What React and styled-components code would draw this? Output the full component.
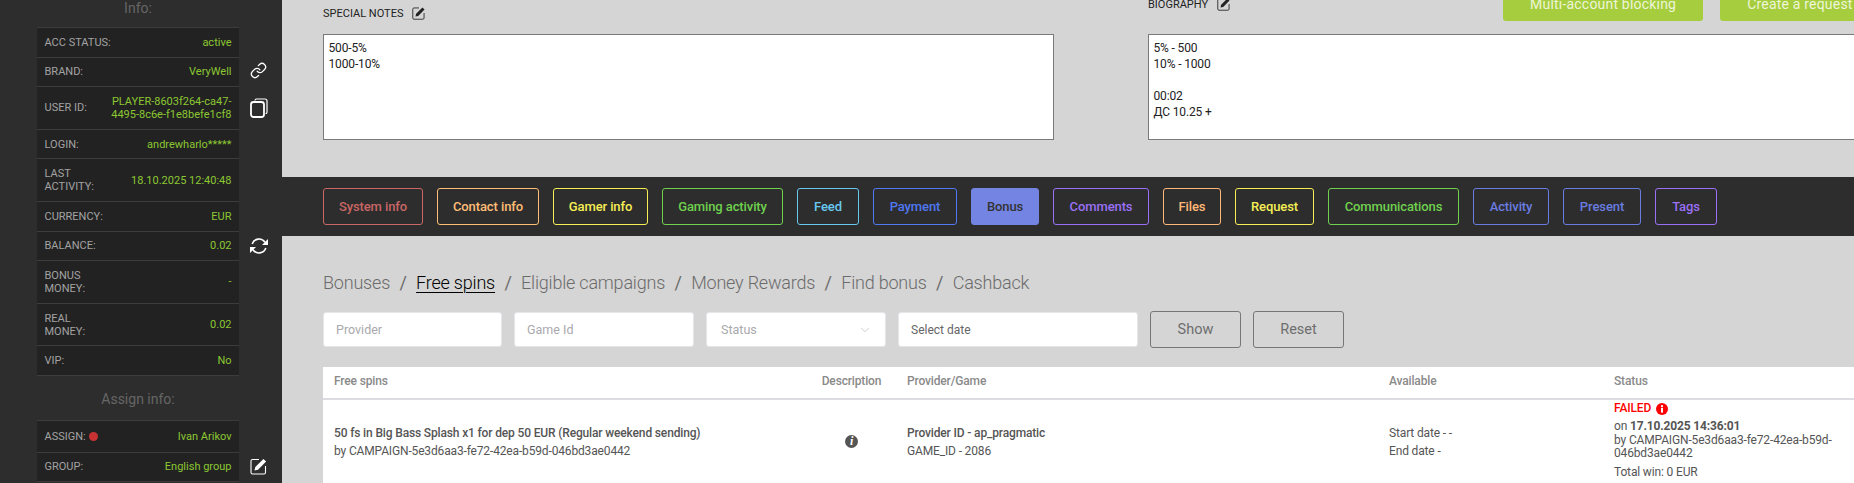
import React from 'react'
import styled, { createGlobalStyle } from 'styled-components'
import { ChevronDown, Link } from 'lucide-react'

const playerRows = [
  { label: 'ACC STATUS:', value: 'active' },
  { label: 'BRAND:', value: 'VeryWell' },
  { label: 'USER ID:', value: 'PLAYER-8603f264-ca47-\n4495-8c6e-f1e8befe1cf8' },
  { label: 'LOGIN:', value: 'andrewharlo*****' },
  { label: 'LAST\nACTIVITY:', value: '18.10.2025 12:40:48' },
  { label: 'CURRENCY:', value: 'EUR' },
  { label: 'BALANCE:', value: '0.02' },
  { label: 'BONUS\nMONEY:', value: '-' },
  { label: 'REAL\nMONEY:', value: '0.02' },
  { label: 'VIP:', value: 'No' },
]

const tabs = [
  { name: 'System info', color: '#c96666', width: 100 },
  { name: 'Contact info', color: '#ffbe76', width: 102 },
  { name: 'Gamer info', color: '#f6ee55', width: 95 },
  { name: 'Gaming activity', color: '#6fd14e', width: 121 },
  { name: 'Feed', color: '#68c8f0', width: 62 },
  { name: 'Payment', color: '#4f78f2', width: 84 },
  { name: 'Bonus', color: '#7484e2', width: 68, active: true },
  { name: 'Comments', color: '#9a70f5', width: 96 },
  { name: 'Files', color: '#ffb876', width: 58 },
  { name: 'Request', color: '#f6ee55', width: 79 },
  { name: 'Communications', color: '#6fd14e', width: 131 },
  { name: 'Activity', color: '#6a7ce0', width: 76 },
  { name: 'Present', color: '#6a7ce0', width: 78 },
  { name: 'Tags', color: '#9a70f5', width: 62 },
]

const crumbs = ['Bonuses', 'Free spins', 'Eligible campaigns', 'Money Rewards', 'Find bonus', 'Cashback']

function CopyIcon() {
  return (
    <svg width="18" height="20" viewBox="0 0 18 20" fill="none" stroke="#fff">
      <path d="M5 2.5 C5 1.5 5.6 1 6.5 1 H15 C16.2 1 17 1.8 17 3 V14 C17 15 16.4 15.6 15.6 15.6" strokeWidth="1.2" />
      <rect x="1" y="4" width="13" height="15" rx="2.5" strokeWidth="1.8" />
    </svg>
  )
}

function RefreshIcon() {
  return (
    <svg width="20" height="20" viewBox="0 0 20 20" fill="none">
      <path d="M3.2 8 A7.2 7.2 0 0 1 16 6.2" stroke="#fff" strokeWidth="1.6" />
      <path d="M19 3 V9 H13 Z" fill="#fff" />
      <path d="M16.8 12 A7.2 7.2 0 0 1 4 13.8" stroke="#fff" strokeWidth="1.6" />
      <path d="M1 17 V11 H7 Z" fill="#fff" />
    </svg>
  )
}

function EditIcon({ size = 18, color = '#fff' }) {
  return (
    <svg width={size} height={size} viewBox="0 0 18 18" fill="none">
      <path d="M9 2.5 H2.5 C1.6 2.5 1 3.1 1 4 V15.5 C1 16.4 1.6 17 2.5 17 H14 C14.9 17 15.5 16.4 15.5 15.5 V9" stroke={color} strokeWidth="1.1" />
      <path d="M4.5 13.5 L5.3 10 L13.4 1.9 L16.1 4.6 L8 12.7 Z" fill={color} />
    </svg>
  )
}

function FailedIcon() {
  return (
    <svg width="12" height="12" viewBox="0 0 12 12">
      <circle cx="6" cy="6" r="6" fill="#f00" />
      <rect x="5" y="2.2" width="2" height="2" fill="#fff" />
      <rect x="5" y="5" width="2" height="4.6" fill="#fff" />
    </svg>
  )
}

export default function App() {
  return (
    <Page>
      <GlobalStyle />
      <Sidebar>
        <SideColumn>
          <SideTitle>Info:</SideTitle>
          <InfoTable>
            {playerRows.map((row) => (
              <InfoRow key={row.label}>
                <InfoLabel>{row.label}</InfoLabel>
                <InfoValue>{row.value}</InfoValue>
              </InfoRow>
            ))}
          </InfoTable>
          <SideTitle $assign>Assign info:</SideTitle>
          <InfoTable>
            <InfoRow $high>
              <InfoLabel>ASSIGN: <RedDot /></InfoLabel>
              <InfoValue>Ivan Arikov</InfoValue>
            </InfoRow>
            <InfoRow>
              <InfoLabel>GROUP:</InfoLabel>
              <InfoValue>English group</InfoValue>
            </InfoRow>
          </InfoTable>
        </SideColumn>
        <IconRail>
          <RailIcon $top={62}><Link size={17} color="#fff" strokeWidth={1.8} /></RailIcon>
          <RailIcon $top={19}><CopyIcon /></RailIcon>
          <RailIcon $top={118}><RefreshIcon /></RailIcon>
          <RailIcon $top={201}><EditIcon /></RailIcon>
        </IconRail>
      </Sidebar>

      <Main>
        <NotesRow>
          <NotesLeft>
            <NoteHead>
              <NoteLabel>SPECIAL NOTES</NoteLabel>
              <EditIcon size={14} color="#222" />
            </NoteHead>
            <NoteArea readOnly value={'500-5%\n1000-10%'} />
          </NotesLeft>
          <NotesRight>
            <NoteHead $actions>
              <NoteLabel>BIOGRAPHY</NoteLabel>
              <EditIcon size={14} color="#222" />
              <GreenButton $first>Multi-account blocking</GreenButton>
              <GreenButton>Create a request</GreenButton>
            </NoteHead>
            <NoteArea readOnly value={'5% - 500\n10% - 1000\n\n00:02\nДС 10.25 +'} />
          </NotesRight>
        </NotesRow>

        <TabBar>
          {tabs.map((tab) => (
            <Tab key={tab.name} $color={tab.color} $width={tab.width} $active={tab.active}>{tab.name}</Tab>
          ))}
        </TabBar>

        <Content>
          <Crumbs>
            {crumbs.map((crumb, i) => (
              <React.Fragment key={crumb}>
                {i > 0 && <Slash>/</Slash>}
                <Crumb $active={crumb === 'Free spins'}>{crumb}</Crumb>
              </React.Fragment>
            ))}
          </Crumbs>

          <Filters>
            <FilterInput placeholder="Provider" />
            <FilterInput placeholder="Game Id" $width={180} />
            <FilterSelect>
              Status
              <ChevronDown size={14} color="#aaa" strokeWidth={1} />
            </FilterSelect>
            <DateInput placeholder="Select date" />
            <OutlineButton>Show</OutlineButton>
            <OutlineButton>Reset</OutlineButton>
          </Filters>

          <Table>
            <HeadRow>
              <HeadCell>Free spins</HeadCell>
              <HeadCell $center>Description</HeadCell>
              <HeadCell>Provider/Game</HeadCell>
              <HeadCell>Available</HeadCell>
              <HeadCell>Status</HeadCell>
            </HeadRow>
            <BodyRow>
              <BodyCell>
                <Strong>50 fs in Big Bass Splash x1 for dep 50 EUR (Regular weekend sending)</Strong>
                <Line>by CAMPAIGN-5e3d6aa3-fe72-42ea-b59d-046bd3ae0442</Line>
              </BodyCell>
              <BodyCell $center>
                <DescriptionBadge>i</DescriptionBadge>
              </BodyCell>
              <BodyCell>
                <Strong>Provider ID - ap_pragmatic</Strong>
                <Line>GAME_ID - 2086</Line>
              </BodyCell>
              <BodyCell>
                <Line>Start date - -</Line>
                <Line>End date -</Line>
              </BodyCell>
              <StatusCell>
                <Failed>FAILED <FailedIcon /></Failed>
                <StatusText>on <b>17.10.2025 14:36:01</b><br />by CAMPAIGN-5e3d6aa3-fe72-42ea-b59d-046bd3ae0442</StatusText>
                <TotalWin>Total win: 0 EUR</TotalWin>
              </StatusCell>
            </BodyRow>
          </Table>
        </Content>
      </Main>
    </Page>
  )
}

const GlobalStyle = createGlobalStyle`
  html, body {
    margin: 0;
    padding: 0;
    overflow: hidden;
    background: #d5d5d5;
  }
  * {
    box-sizing: border-box;
  }
`

const Page = styled.div`
  display: flex;
  height: 483px;
  overflow: hidden;
  font-family: Roboto, "Liberation Sans", sans-serif;
  font-size: 12px;
`

const Sidebar = styled.aside`
  flex: 0 0 282px;
  display: flex;
  padding-left: 37px;
  background: #2d2d2d;
`

const SideColumn = styled.div`
  width: 202px;
`

const SideTitle = styled.div`
  height: ${(p) => (p.$assign ? '44px' : '27px')};
  padding-top: ${(p) => (p.$assign ? '15px' : '0')};
  color: #666;
  font-size: 14px;
  line-height: 17px;
  text-align: center;
`

const InfoTable = styled.div`
  background: #222;
  border-top: 1px solid #3c3c3c;
`

const InfoRow = styled.div`
  display: flex;
  align-items: center;
  justify-content: space-between;
  min-height: ${(p) => (p.$high ? '31.6px' : '29.6px')};
  padding: 7.8px 7.5px;
  border-bottom: 1px solid #3c3c3c;
  font-size: 11px;
  line-height: 13px;
`

const InfoLabel = styled.div`
  color: #a3a3a3;
  white-space: pre;
`

const InfoValue = styled.div`
  color: #8cc732;
  text-align: right;
  white-space: pre;
`

const RedDot = styled.span`
  display: inline-block;
  width: 9px;
  height: 9px;
  margin-left: 1px;
  border-radius: 50%;
  background: #c83232;
  vertical-align: -1px;
`

const IconRail = styled.div`
  display: flex;
  flex-direction: column;
  align-items: center;
  width: 35px;
  margin-left: 2px;
`

const RailIcon = styled.div`
  display: flex;
  margin-top: ${(p) => p.$top}px;
`

const Main = styled.main`
  flex: 1;
  min-width: 0;
  overflow: hidden;
`

const NotesRow = styled.div`
  display: flex;
  align-items: flex-end;
  height: 140px;
  padding-left: 41px;
`

const NotesLeft = styled.div`
  flex: 0 0 731px;
`

const NotesRight = styled.div`
  flex: 0 0 780px;
  margin-left: 94px;
`

const NoteHead = styled.div`
  display: flex;
  align-items: center;
  gap: 9px;
  height: ${(p) => (p.$actions ? '34px' : '14px')};
  margin-bottom: ${(p) => (p.$actions ? '13px' : '14px')};
`

const NoteLabel = styled.span`
  color: #222;
  font-size: 11px;
`

const NoteArea = styled.textarea`
  display: block;
  width: 100%;
  height: 106px;
  padding: 5px 4.5px;
  border: 1px solid #7a7a7a;
  border-radius: 0;
  outline: none;
  resize: none;
  overflow: hidden;
  background: #fff;
  color: #222;
  font-family: inherit;
  font-size: 12px;
  letter-spacing: -0.15px;
  line-height: 16px;
`

const GreenButton = styled.button`
  flex: none;
  height: 34px;
  margin-left: ${(p) => (p.$first ? '263px' : '8px')};
  padding: 0 27px;
  border: 0;
  border-radius: 3px;
  background: #a5cd3e;
  color: #eef5d8;
  font-family: inherit;
  font-size: 14px;
  letter-spacing: 0.2px;
`

const TabBar = styled.nav`
  display: flex;
  gap: 14px;
  height: 59px;
  margin-top: 37px;
  padding: 11px 41px;
  background: #2d2d2d;
`

const Tab = styled.div`
  display: flex;
  align-items: center;
  justify-content: center;
  flex: 0 0 ${(p) => p.$width}px;
  height: 37px;
  border: 1px solid ${(p) => p.$color};
  border-radius: 3px;
  background: ${(p) => (p.$active ? p.$color : 'transparent')};
  color: ${(p) => (p.$active ? '#333' : p.$color)};
  font-size: 13px;
  font-weight: 500;
  letter-spacing: -0.1px;
`

const Content = styled.section`
  padding: 36px 0 0 41px;
`

const Crumbs = styled.div`
  display: flex;
  align-items: baseline;
  height: 22px;
  color: #6b6b6b;
  font-size: 18px;
  font-weight: 300;
  letter-spacing: -0.2px;
  line-height: 22px;
`

const Crumb = styled.span`
  color: ${(p) => (p.$active ? '#000' : '#6b6b6b')};
  text-decoration: ${(p) => (p.$active ? 'underline' : 'none')};
  text-underline-offset: 3px;
  text-decoration-thickness: 1px;
`

const Slash = styled.span`
  width: 26px;
  font-weight: 400;
  text-align: center;
`

const Filters = styled.div`
  display: flex;
  align-items: center;
  gap: 12px;
  height: 37px;
  margin-top: 17px;
`

const FilterInput = styled.input`
  width: ${(p) => p.$width || 179}px;
  height: 35px;
  padding: 0 12px;
  border: 1px solid #e6e6ea;
  border-radius: 3px;
  outline: none;
  background: #fff;
  font-family: inherit;
  font-size: 12.5px;

  &::placeholder {
    color: #a9a9ad;
  }
`

const FilterSelect = styled.div`
  display: flex;
  align-items: center;
  justify-content: space-between;
  width: 180px;
  height: 35px;
  padding: 0 13px 0 14px;
  border: 1px solid #e6e6ea;
  border-radius: 3px;
  background: #fff;
  color: #a9a9ad;
  font-size: 12.5px;
`

const DateInput = styled(FilterInput)`
  width: 240px;
  font-size: 12px;

  &::placeholder {
    color: #666;
  }
`

const OutlineButton = styled.button`
  width: 91px;
  height: 37px;
  border: 1px solid #777;
  border-radius: 3px;
  background: transparent;
  color: #6e6e6e;
  font-family: inherit;
  font-size: 14.5px;
`

const Table = styled.div`
  width: 1531px;
  margin-top: 19px;
  background: #fff;
  color: #555;
  letter-spacing: -0.15px;
`

const columns = `
  display: grid;
  grid-template-columns: 487px 86px 482px 225px 1fr;
`

const HeadRow = styled.div`
  ${columns}
  height: 33px;
  padding-top: 7px;
  border-bottom: 2px solid #dcdce2;
  line-height: 14px;
`

const HeadCell = styled.div`
  padding: ${(p) => (p.$center ? '0 3px 0 0' : '0 0 0 11px')};
  color: #8a8a8a;
  font-weight: 500;
  text-align: ${(p) => (p.$center ? 'center' : 'left')};
`

const BodyRow = styled.div`
  ${columns}
  align-items: center;
  height: 83px;
`

const BodyCell = styled.div`
  display: flex;
  flex-direction: column;
  align-items: ${(p) => (p.$center ? 'center' : 'flex-start')};
  gap: 4px;
  padding: ${(p) => (p.$center ? '0 3px 0 0' : '0 0 0 11px')};
  line-height: 14px;
`

const Strong = styled.div`
  font-weight: 500;
`

const Line = styled.div``

const DescriptionBadge = styled.span`
  width: 13px;
  height: 13px;
  border-radius: 50%;
  background: #555;
  color: #fff;
  font-family: "Liberation Serif", serif;
  font-size: 12px;
  font-style: italic;
  font-weight: 700;
  line-height: 13px;
  text-align: center;
`

const StatusCell = styled.div`
  align-self: start;
  padding: 2px 0 0 11px;
  line-height: 13.5px;
`

const Failed = styled.div`
  display: flex;
  align-items: center;
  gap: 5px;
  height: 14px;
  color: #f00;
  font-weight: 500;
`

const StatusText = styled.div`
  margin-top: 4px;
`

const TotalWin = styled.div`
  margin-top: 5px;
`
